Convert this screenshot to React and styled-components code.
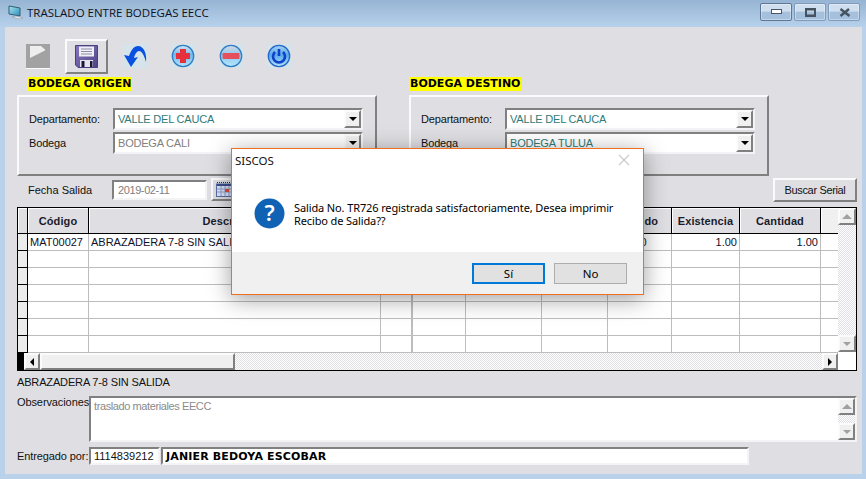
import React from "react";
import styled, { createGlobalStyle, css } from "styled-components";

const GlobalStyle = createGlobalStyle`
	html, body {
		margin: 0;
		padding: 0;
		background: #b9d1ea;
	}
	* {
		box-sizing: border-box;
	}
`;

const raised = css`
	border-style: solid;
	border-width: 2px;
	border-color: #fbfbfb #808080 #808080 #fbfbfb;
`;
const sunken = css`
	border-style: solid;
	border-width: 2px;
	border-color: #808080 #f4f4f6 #f4f4f6 #808080;
	background: #fff;
`;
const dither = css`
	background: repeating-conic-gradient(#fff 0 25%, #dfdfe3 0 50%) 0 0 / 2px 2px;
`;

const Window = styled.div`
	width: 866px;
	height: 479px;
	position: relative;
	overflow: hidden;
	display: flex;
	flex-direction: column;
	background: #b9d1ea;
	font-family: "Liberation Sans", Arial, sans-serif;
	font-size: 11px;
	color: #000;
`;
const TitleBar = styled.div`
	height: 27px;
	flex: none;
	display: flex;
	align-items: center;
	padding: 0 6px 3px 8px;
	background: linear-gradient(#96b4d3, #b7d1eb);
`;
const TitleText = styled.div`
	font-family: "Open Sans", sans-serif;
	font-size: 11.5px;
	color: #10101c;
	margin-left: 3px;
	flex: 1;
`;
const WinButtons = styled.div`
	display: flex;
	gap: 2px;
`;
const WinButton = styled.div`
	width: 32px;
	height: 18px;
	border-radius: 2px;
	display: flex;
	align-items: center;
	justify-content: center;
	border: 1px solid ${(p) => (p.$active ? "#5f7694" : "#7f9abb")};
	background: linear-gradient(#cfdff0 0 45%, #a5c0dc 50% 100%);
	box-shadow: inset 0 0 0 1px rgba(255, 255, 255, 0.35);
`;
const Body = styled.div`
	flex: none;
	width: 857px;
	height: 447px;
	margin-left: 5px;
	padding: 12px 5px 0 12px;
	background: #dfdfe3;
`;
const Toolbar = styled.div`
	height: 34px;
	display: flex;
	align-items: center;
	padding-left: 9px;
`;
const ToolIcon = styled.div`
	flex: none;
	width: 24px;
	height: 24px;
	margin-right: ${(p) => p.$gap || 24}px;
	display: flex;
`;
const SaveButton = styled.div`
	${raised}
	flex: none;
	width: 43px;
	height: 35px;
	margin-right: 15px;
	display: flex;
	align-items: center;
	justify-content: center;
`;
const Sections = styled.div`
	display: flex;
	gap: 32px;
	margin-top: 4px;
`;
const Section = styled.div`
	width: 360px;
`;
const SectionTitle = styled.div`
	display: inline-block;
	vertical-align: top;
	height: 14px;
	line-height: 14px;
	margin: 0 0 4px ${(p) => p.$indent || 0}px;
	padding: 0 1px;
	background: #ffff00;
	font-family: "DejaVu Sans", sans-serif;
	font-weight: 700;
	font-size: 11px;
	color: #000;
`;
const GroupBox = styled.div`
	${raised}
	height: 81px;
	padding: 11px 12px 0 10px;
	display: flex;
	flex-direction: column;
	gap: 2px;
`;
const FieldRow = styled.div`
	height: 22px;
	display: flex;
	align-items: center;
`;
const FieldLabel = styled.div`
	width: 84px;
	flex: none;
	letter-spacing: -0.15px;
	color: #111;
`;
const Combo = styled.div`
	${sunken}
	flex: 1;
	height: 22px;
	display: flex;
	align-items: center;
	padding-left: 3px;
	font-size: 11px;
	letter-spacing: -0.2px;
	color: ${(p) => (p.$disabled ? "#808080" : "#2f7a7a")};
`;
const ComboValue = styled.div`
	flex: 1;
`;
const ComboButton = styled.div`
	${raised}
	width: 17px;
	height: 18px;
	background: #f0f0f0;
	display: flex;
	align-items: center;
	justify-content: center;
`;
const Arrow = styled.span`
	width: 0;
	height: 0;
	border-style: solid;
	border-color: transparent;
	${(p) => p.$dir === "down" && `border-width: 4px 4px 0 4px; border-top-color: ${p.$color};`}
	${(p) => p.$dir === "up" && `border-width: 0 5px 5px 5px; border-bottom-color: ${p.$color};`}
	${(p) => p.$dir === "left" && `border-width: 4px 4px 4px 0; border-right-color: ${p.$color};`}
	${(p) => p.$dir === "right" && `border-width: 4px 0 4px 4px; border-left-color: ${p.$color};`}
`;
const DateRow = styled.div`
	height: 23px;
	margin-top: 2px;
	display: flex;
	align-items: center;
	padding-left: 11px;
`;
const DateLabel = styled.div`
	width: 84px;
	flex: none;
	color: #111;
`;
const DateInput = styled.div`
	${sunken}
	width: 95px;
	height: 20px;
	padding-left: 4px;
	line-height: 16px;
	font-size: 11px;
	letter-spacing: -0.4px;
	color: #808080;
`;
const CalendarButton = styled.div`
	${raised}
	width: 26px;
	height: 23px;
	margin-left: 4px;
	display: flex;
	align-items: center;
	justify-content: center;
`;
const SearchButton = styled.div`
	${raised}
	width: 84px;
	height: 24px;
	margin-left: auto;
	text-align: center;
	line-height: 20px;
	font-size: 11px;
	letter-spacing: -0.35px;
	color: #111;
`;
const GridFrame = styled.div`
	width: 840px;
	height: 164px;
	margin-top: 6px;
	border: 1px solid #000;
	display: flex;
	background: #fff;
`;
const GridMain = styled.div`
	width: 820px;
	display: flex;
	flex-direction: column;
`;
const Table = styled.table`
	width: 820px;
	table-layout: fixed;
	border-collapse: separate;
	border-spacing: 0;
	flex: none;
`;
const HeadCell = styled.th`
	height: 26px;
	padding: 0;
	background: ${(p) => (p.$blank ? "#f0f0f0" : "#dfdfe3")};
	border-right: ${(p) => (p.$blank ? "none" : "1px solid #000")};
	border-bottom: 1px solid #000;
	font-size: 11px;
	letter-spacing: 0.1px;
	font-weight: 700;
	color: #1b1b2b;
	box-shadow: inset 1px 1px 0 #fff;
`;
const RowHead = styled.td`
	height: 17px;
	padding: 0;
	background: #ececec;
	border-right: 1px solid #000;
	border-bottom: 1px solid #000;
`;
const Cell = styled.td`
	height: 17px;
	padding: 0 2px;
	border-right: ${(p) => (p.$last ? "none" : `${p.$thick ? 2 : 1}px solid #bdbdbd`)};
	border-bottom: 1px solid #bdbdbd;
	font-size: 11px;
	line-height: 14px;
	text-align: ${(p) => (p.$right ? "right" : "left")};
	white-space: nowrap;
	overflow: hidden;
	color: #10102a;
`;
const HScroll = styled.div`
	height: 17px;
	display: flex;
	background: #dfdfe3;
`;
const ScrollEnd = styled.div`
	width: 6px;
	flex: none;
	background: #000;
`;
const ScrollButton = styled.div`
	${raised}
	flex: none;
	width: ${(p) => p.$w || 16}px;
	height: ${(p) => p.$h || 17}px;
	background: #f0f0f0;
	display: flex;
	align-items: center;
	justify-content: center;
`;
const ScrollThumb = styled.div`
	${raised}
	flex: none;
	width: 195px;
	background: #f0f0f0;
`;
const ScrollTrack = styled.div`
	${dither}
	flex: 1;
`;
const VScroll = styled.div`
	width: 18px;
	display: flex;
	flex-direction: column;
`;
const Corner = styled.div`
	flex: none;
	height: 18px;
	background: #fff;
`;
const ItemName = styled.div`
	height: 14px;
	line-height: 14px;
	margin-top: 4px;
	letter-spacing: -0.15px;
	color: #111;
`;
const NotesRow = styled.div`
	display: flex;
	margin-top: 7px;
`;
const RowLabel = styled.div`
	width: 72px;
	flex: none;
	line-height: 12px;
	letter-spacing: -0.1px;
	white-space: nowrap;
	color: #111;
`;
const Notes = styled.div`
	${sunken}
	width: 768px;
	height: 46px;
	display: flex;
	font-size: 11px;
	letter-spacing: -0.4px;
	color: #8a8a8a;
`;
const NotesText = styled.div`
	flex: 1;
	padding: 1px 0 0 3px;
	line-height: 14px;
`;
const NotesScroll = styled.div`
	width: 17px;
	flex: none;
	display: flex;
	flex-direction: column;
`;
const DeliverRow = styled.div`
	display: flex;
	align-items: center;
	margin-top: 5px;
	height: 18px;
`;
const CodeInput = styled.div`
	${sunken}
	width: 71px;
	height: 18px;
	margin-right: 1px;
	padding-left: 3px;
	font-size: 11px;
	line-height: 15px;
	color: #111;
`;
const NameInput = styled.div`
	${sunken}
	width: 588px;
	height: 18px;
	padding-left: 3px;
	font-family: "DejaVu Sans", sans-serif;
	font-weight: 700;
	font-size: 11px;
	line-height: 15px;
	letter-spacing: 0.15px;
	color: #000;
`;
const Dialog = styled.div`
	position: absolute;
	left: 231px;
	top: 148px;
	width: 413px;
	height: 147px;
	display: flex;
	flex-direction: column;
	background: #fff;
	border: 1px solid #ef6f1e;
	box-shadow: 0 4px 22px rgba(0, 0, 0, 0.38);
	font-family: "Noto Sans", sans-serif;
	color: #000;
`;
const DialogHead = styled.div`
	height: 22px;
	flex: none;
	display: flex;
	align-items: center;
	justify-content: space-between;
	padding: 0 13px 0 3px;
	font-size: 11.5px;
	color: #111;
`;
const DialogBody = styled.div`
	flex: 1;
	display: flex;
	align-items: flex-start;
	padding: 27px 0 0 22px;
`;
const DialogText = styled.div`
	margin: 3px 0 0 9px;
	font-size: 11px;
	line-height: 13px;
	letter-spacing: -0.12px;
	white-space: nowrap;
`;
const DialogFoot = styled.div`
	height: 42px;
	flex: none;
	background: #f0f0f0;
	display: flex;
	justify-content: flex-end;
	align-items: flex-start;
	gap: 9px;
	padding: 11px 16px 0 0;
`;
const DialogButton = styled.div`
	width: 73px;
	height: 21px;
	background: #e1e1e1;
	border: ${(p) => (p.$focus ? "2px solid #0078d7" : "1px solid #adadad")};
	display: flex;
	align-items: center;
	justify-content: center;
	font-size: 11.5px;
`;

const columns = [10, 61, 292, 32, 53, 76, 66, 64, 68, 81, 17];
const headers = ["", "Código", "Descripción", "", "", "", "", "Pedido", "Existencia", "Cantidad", ""];
const emptyRows = [0, 1, 2, 3, 4, 5];

const FolderIcon = () => (
	<svg width="24" height="25" viewBox="0 0 24 25">
		<rect width="24" height="24" fill="#a2a2a2" />
		<path d="M4 2h11l4 3.5v1L4 14z" fill="#ededed" />
		<path d="M0 24.5h24.5V0" fill="none" stroke="#fafafa" />
	</svg>
);
const SaveIcon = () => (
	<svg width="23" height="23" viewBox="0 0 23 23">
		<defs>
			<linearGradient id="disk" x1="0" y1="0" x2="1" y2="1">
				<stop offset="0%" stopColor="#8878bc" />
				<stop offset="100%" stopColor="#4e4288" />
			</linearGradient>
		</defs>
		<path d="M0.5 0.5h22v22H3l-2.5-2.5z" fill="url(#disk)" stroke="#4a4080" />
		<rect x="4" y="1.5" width="15" height="10" fill="#eeeef4" />
		<path d="M6 4h11M6 6.5h11M6 9h11" stroke="#8c8ca8" />
		<rect x="5" y="15" width="13" height="7" fill="#e4e4ee" />
		<rect x="6.5" y="16" width="3" height="6" fill="#1c1838" />
		<rect x="15" y="16" width="2.5" height="6" fill="#1c1838" />
	</svg>
);
const UndoIcon = () => (
	<svg width="24" height="24" viewBox="0 0 24 24">
		<rect width="24" height="24" fill="#d4e4ea" />
		<path d="M1 11L8 23L15 13L11 14C12 10 14 7 16 7C19 7 21 11 23 18C24 10 21 2 15 2C11 2 8 6 6 12Z" fill="#0a50e0" />
	</svg>
);
const RoundIcon = ({ id, top = "#dbe8f2", mid = "#6db7ef", rim = "#2e7cc6", children }) => (
	<svg width="24" height="24" viewBox="0 0 24 24">
		<defs>
			<linearGradient id={id} x1="0" y1="0" x2="0" y2="1">
				<stop offset="0%" stopColor={top} />
				<stop offset="45%" stopColor={mid} />
				<stop offset="100%" stopColor="#b5e6fc" />
			</linearGradient>
		</defs>
		<rect width="24" height="24" fill="#d4e4ea" />
		<circle cx="12" cy="12" r="10.7" fill={`url(#${id})`} stroke={rim} strokeWidth="1.3" />
		{children}
	</svg>
);
const QuestionIcon = () => (
	<svg width="31" height="31" viewBox="0 0 31 31" style={{ flex: "none" }}>
		<circle cx="15.5" cy="15.5" r="15" fill="#0f62b4" />
		<text x="15.5" y="23" textAnchor="middle" fontFamily="Noto Sans, sans-serif" fontSize="22" fontWeight="600" fill="#fff">?</text>
	</svg>
);
const CalendarIcon = () => (
	<svg width="17" height="15" viewBox="0 0 17 15">
		<rect x="0.5" y="2" width="16" height="12.5" fill="#dbe3f5" stroke="#5a6ea8" />
		<path d="M1 0.5h15" stroke="#333" strokeDasharray="1 1" />
		<rect x="1" y="2" width="15" height="2" fill="#3f4f90" />
		<path d="M1 7h15M1 10h15M5 4v10M9 4v10M13 4v10" stroke="#8fa0d0" />
		<rect x="9" y="7" width="4" height="3" fill="#e0503a" />
	</svg>
);
const AppIcon = () => (
	<svg width="16" height="17" viewBox="0 0 16 17">
		<defs>
			<linearGradient id="screen" x1="0" y1="0" x2="1" y2="1">
				<stop offset="0%" stopColor="#a8e4f0" />
				<stop offset="100%" stopColor="#2c8fb8" />
			</linearGradient>
		</defs>
		<path d="M1 2l11 2v8L1 10z" fill="url(#screen)" stroke="#2f5f74" />
		<path d="M4 13l8 2 3-1-7-2z" fill="#eef1f4" stroke="#8c98a4" strokeWidth="0.6" />
	</svg>
);

const Scroll = ({ dir, w, h, color = "#000" }) => (
	<ScrollButton $w={w} $h={h}>
		<Arrow $dir={dir} $color={color} />
	</ScrollButton>
);

const Field = ({ label, value, disabled }) => (
	<FieldRow>
		<FieldLabel>{label}</FieldLabel>
		<Combo $disabled={disabled}>
			<ComboValue>{value}</ComboValue>
			<ComboButton>
				<Arrow $dir="down" $color="#000" />
			</ComboButton>
		</Combo>
	</FieldRow>
);

export default function App() {
	return (
		<Window>
			<GlobalStyle />
			<TitleBar>
				<AppIcon />
				<TitleText>TRASLADO ENTRE BODEGAS EECC</TitleText>
				<WinButtons>
					<WinButton $active>
						<svg width="11" height="6"><rect x="0.5" y="0.5" width="10" height="4" fill="#fff" stroke="#4b5563" /></svg>
					</WinButton>
					<WinButton>
						<svg width="11" height="9"><path d="M0 0h11v9H0zM2 2.5v4h7v-4z" fill="#46525f" fillRule="evenodd" /></svg>
					</WinButton>
					<WinButton>
						<svg width="11" height="9"><path d="M1.5 1l9 7M10 1L1.5 8" stroke="#46525f" strokeWidth="2.4" /></svg>
					</WinButton>
				</WinButtons>
			</TitleBar>
			<Body>
				<Toolbar>
					<ToolIcon $gap={15}><FolderIcon /></ToolIcon>
					<SaveButton><SaveIcon /></SaveButton>
					<ToolIcon><UndoIcon /></ToolIcon>
					<ToolIcon>
						<RoundIcon id="plus">
							<path d="M9 5h6v4h4v6h-4v4H9v-4H5V9h4z" fill="#e8303c" />
						</RoundIcon>
					</ToolIcon>
					<ToolIcon>
						<RoundIcon id="minus" top="#d8d8e0" mid="#8cc8f0">
							<rect x="3.5" y="9" width="17" height="6" rx="1" fill="#e5505c" />
						</RoundIcon>
					</ToolIcon>
					<ToolIcon>
						<RoundIcon id="power" top="#a8d4f4" mid="#58a8ec" rim="#2466cc">
							<path d="M8 8a6 6 0 1 0 8 0" fill="none" stroke="#1040c8" strokeWidth="2.6" />
							<path d="M12 5v7" stroke="#1040c8" strokeWidth="2.6" />
						</RoundIcon>
					</ToolIcon>
				</Toolbar>
				<Sections>
					<Section>
						<SectionTitle $indent={10}>BODEGA ORIGEN</SectionTitle>
						<GroupBox>
							<Field label="Departamento:" value="VALLE DEL CAUCA" />
							<Field label="Bodega" value="BODEGA CALI" disabled />
						</GroupBox>
					</Section>
					<Section>
						<SectionTitle>BODEGA DESTINO</SectionTitle>
						<GroupBox>
							<Field label="Departamento:" value="VALLE DEL CAUCA" />
							<Field label="Bodega" value="BODEGA TULUA" />
						</GroupBox>
					</Section>
				</Sections>
				<DateRow>
					<DateLabel>Fecha Salida</DateLabel>
					<DateInput>2019-02-11</DateInput>
					<CalendarButton><CalendarIcon /></CalendarButton>
					<SearchButton>Buscar Serial</SearchButton>
				</DateRow>
				<GridFrame>
					<GridMain>
						<Table>
							<colgroup>
								{columns.map((w, i) => <col key={i} style={{ width: w }} />)}
							</colgroup>
							<thead>
								<tr>
									{headers.map((h, i) => (
										<HeadCell key={i} $blank={i === headers.length - 1}>{h}</HeadCell>
									))}
								</tr>
							</thead>
							<tbody>
								<tr>
									<RowHead />
									<Cell>MAT00027</Cell>
									<Cell>ABRAZADERA 7-8 SIN SALIDA</Cell>
									<Cell $thick />
									<Cell />
									<Cell />
									<Cell />
									<Cell>000000</Cell>
									<Cell $right>1.00</Cell>
									<Cell $right>1.00</Cell>
									<Cell $last />
								</tr>
								{emptyRows.map((r) => (
									<tr key={r}>
										<RowHead />
										{columns.slice(1).map((w, i) => (
											<Cell key={i} $thick={i === 2} $last={i === columns.length - 2} />
										))}
									</tr>
								))}
							</tbody>
						</Table>
						<HScroll>
							<ScrollEnd />
							<Scroll dir="left" />
							<ScrollThumb />
							<ScrollTrack />
							<Scroll dir="right" />
						</HScroll>
					</GridMain>
					<VScroll>
						<Scroll dir="up" w={18} h={17} color="#a0a0a0" />
						<ScrollTrack />
						<Scroll dir="down" w={18} h={17} color="#a0a0a0" />
						<Corner />
					</VScroll>
				</GridFrame>
				<ItemName>ABRAZADERA 7-8 SIN SALIDA</ItemName>
				<NotesRow>
					<RowLabel>Observaciones</RowLabel>
					<Notes>
						<NotesText>traslado materiales EECC</NotesText>
						<NotesScroll>
							<Scroll dir="up" w={17} h={17} color="#a0a0a0" />
							<ScrollTrack />
							<Scroll dir="down" w={17} h={17} color="#a0a0a0" />
						</NotesScroll>
					</Notes>
				</NotesRow>
				<DeliverRow>
					<RowLabel>Entregado por:</RowLabel>
					<CodeInput>1114839212</CodeInput>
					<NameInput>JANIER BEDOYA ESCOBAR</NameInput>
				</DeliverRow>
			</Body>
			<Dialog>
				<DialogHead>
					<span>SISCOS</span>
					<svg width="12" height="12"><path d="M1 1l10 10M11 1L1 11" stroke="#c8c8c8" strokeWidth="1.1" /></svg>
				</DialogHead>
				<DialogBody>
					<QuestionIcon />
					<DialogText>
						Salida No. TR726 registrada satisfactoriamente, Desea imprimir<br />
						Recibo de Salida??
					</DialogText>
				</DialogBody>
				<DialogFoot>
					<DialogButton $focus>Sí</DialogButton>
					<DialogButton>No</DialogButton>
				</DialogFoot>
			</Dialog>
		</Window>
	);
}
